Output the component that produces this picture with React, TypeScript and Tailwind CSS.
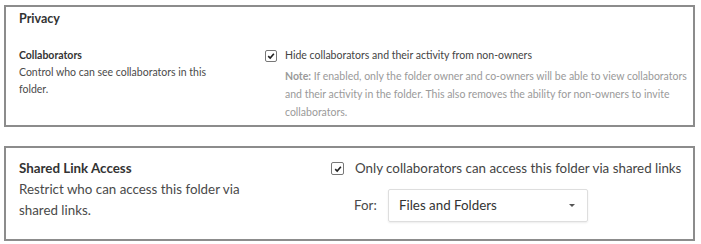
function Check({ size }: { size: "sm" | "md" }) {
  const box = size === "sm" ? "w-[12px] h-[12px]" : "w-[13px] h-[13px]";
  return (
    <span
      className={`${box} shrink-0 inline-flex items-center justify-center rounded-[2px] border border-[#777] bg-white`}
    >
      <svg viewBox="0 0 10 10" className="w-[8px] h-[8px]">
        <path d="M1.5 5.2 L4 7.6 L8.6 2.2" fill="none" stroke="#222" strokeWidth="2" />
      </svg>
    </span>
  );
}

export default function App() {
  return (
    <div
      className="w-[701px] h-[244px] bg-white pt-[5px] pl-[4px] text-[#4a4a4a]"
      style={{ fontFamily: "Lato, 'Open Sans', sans-serif" }}
    >
      {/* Privacy */}
      <section className="w-[691px] h-[122px] border-2 border-[#8c8c8c] pl-[13px] pt-[2px]">
        <h2 className="text-[12.5px] font-bold text-[#333] leading-[20px]">Privacy</h2>
        <div className="flex mt-[18px]">
          <div className="w-[246px] text-[10.5px] leading-[17px]">
            <div className="font-bold text-[#333]">Collaborators</div>
            <div className="w-[195px]">Control who can see collaborators in this folder.</div>
          </div>
          <div className="flex-1 text-[10.5px]">
            <label className="flex items-center gap-[8px] leading-[17px] text-[#444]">
              <Check size="sm" />
              Hide collaborators and their activity from non-owners
            </label>
            <p className="ml-[20px] mt-[3px] pr-[2px] leading-[18px] text-[#9a9a9a]">
              <span className="font-bold">Note:</span> If enabled, only the folder owner and
              co-owners will be able to view collaborators and their activity in the folder. This
              also removes the ability for non-owners to invite collaborators.
            </p>
          </div>
        </div>
      </section>

      {/* Shared link access */}
      <section className="w-[691px] h-[95px] mt-[19px] border-2 border-[#8c8c8c] pl-[13px] pt-[10px] flex">
        <div className="w-[312px] text-[13.35px] leading-[21px]">
          <div className="font-bold text-[#333]">Shared Link Access</div>
          <div className="w-[232px]">Restrict who can access this folder via shared links.</div>
        </div>
        <div className="flex-1 text-[13.35px]">
          <label className="flex items-center gap-[11px] leading-[21px] text-[#444]">
            <Check size="md" />
            Only collaborators can access this folder via shared links
          </label>
          <div className="flex items-center mt-[10px] ml-[23px]">
            <span className="w-[34px]">For:</span>
            <div className="w-[200px] h-[33px] border border-[#dedede] rounded-[2px] shadow-[0_1px_2px_rgba(0,0,0,0.08)] flex items-center justify-between pl-[10px] pr-[12px] text-[#333]">
              <span>Files and Folders</span>
              <svg viewBox="0 0 6 4" className="w-[6px] h-[4px]">
                <path d="M0 0 H6 L3 3 Z" fill="#555" />
              </svg>
            </div>
          </div>
        </div>
      </section>
    </div>
  );
}
